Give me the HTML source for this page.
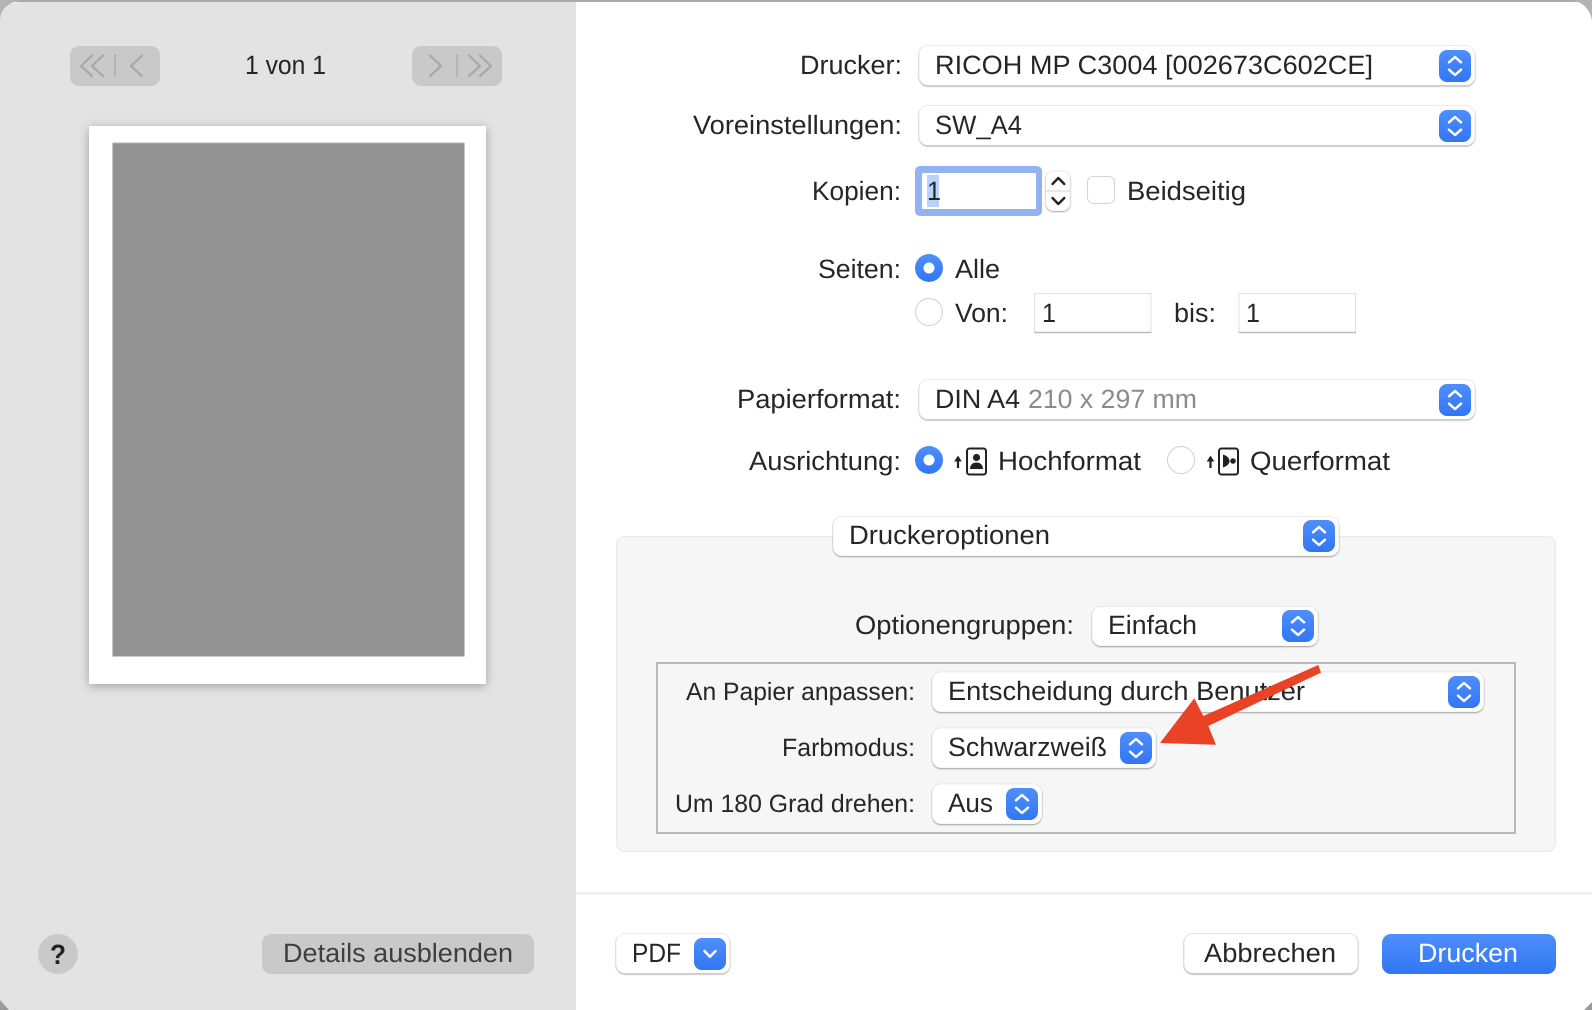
<!DOCTYPE html>
<html lang="de">
<head>
<meta charset="utf-8">
<title>Drucken</title>
<style>
html,body{margin:0;padding:0;width:1592px;height:1010px;overflow:hidden;background:#fff}
svg{display:block}
text{font-family:"Liberation Sans",Arial,sans-serif;font-size:26.5px;fill:#262626;text-rendering:geometricPrecision}
.s{font-size:25px}
.g{fill:#8b8b8b}
.sel{fill:#fff;stroke:#000;stroke-opacity:.07;stroke-width:1}
.w{fill:none;stroke:#fff;stroke-width:2.5;stroke-linecap:round;stroke-linejoin:round}
.nav{fill:none;stroke:#a8a8a8;stroke-width:2.2;stroke-linecap:round;stroke-linejoin:round}
.field{fill:#fff;stroke:#e2e2e2;stroke-width:1}
</style>
</head>
<body>
<svg width="1592" height="1010" viewBox="0 0 1592 1010" xmlns="http://www.w3.org/2000/svg">
<defs>
<linearGradient id="b" x1="0" y1="0" x2="0" y2="1"><stop offset="0" stop-color="#4e8ffb"/><stop offset="1" stop-color="#3176f5"/></linearGradient>
<filter id="sh" x="-5%" y="-20%" width="110%" height="150%"><feDropShadow dx="0" dy="1" stdDeviation=".7" flood-color="#000" flood-opacity=".32"/></filter>
<filter id="pg" x="-10%" y="-10%" width="120%" height="120%"><feDropShadow dx="0" dy="2" stdDeviation="5" flood-color="#000" flood-opacity=".3"/></filter>
<g id="ud"><rect width="32" height="32" rx="8" fill="url(#b)"/><path class="w" d="M10 12.3L16 7L22 12.3M10 19.7L16 25L22 19.7"/></g>
</defs>

<!-- window frame -->
<rect width="1592" height="1010" fill="#fff"/>
<rect x="0" y="0" width="1592" height="2" fill="#aaa"/>
<path d="M0 0H22Q4 2 0 20Z" fill="#b4b4b4"/>
<path d="M1592 0H1570Q1588 2 1592 20Z" fill="#b4b4b4"/>

<!-- sidebar -->
<path d="M0 20Q1 3 20 2H576V1010H9L0 1000Z" fill="#e3e3e3"/>
<path d="M0 1000L9 1010H0Z" fill="#9a9a9a"/>
<path d="M1592 1002L1584 1010H1592Z" fill="#9a9a9a"/>

<!-- nav -->
<rect x="70" y="46" width="90" height="40" rx="9" fill="#c9c9c9"/>
<path class="nav" d="M92 55.5L81 66L92 76M103 55.5L92 66L103 76M142 55.5L131 66L142 76"/>
<path d="M115 54V77" stroke="#b0b0b0" stroke-width="1.6"/>
<rect x="412" y="46" width="90" height="40" rx="9" fill="#c9c9c9"/>
<path class="nav" d="M430 55.5L441 66L430 76M469 55.5L480 66L469 76M480 55.5L491 66L480 76"/>
<path d="M457 54V77" stroke="#b0b0b0" stroke-width="1.6"/>
<text x="245" y="74" textLength="81" lengthAdjust="spacingAndGlyphs">1 von 1</text>

<!-- page preview -->
<rect x="89" y="126" width="397" height="558" fill="#fff" filter="url(#pg)"/>
<rect x="112.5" y="142.5" width="352" height="514" fill="#929292"/>
<path d="M112.5 143H464.5" stroke="#b5b5b5" stroke-width="1"/>

<!-- bottom left -->
<circle cx="58" cy="954" r="20" fill="#c9c9c9"/>
<text x="50" y="964" textLength="16" lengthAdjust="spacingAndGlyphs" style="font-size:28px;fill:#222;font-weight:bold">?</text>
<rect x="262" y="934" width="272" height="40" rx="9" fill="#c9c9c9"/>
<text x="283" y="962" textLength="230" lengthAdjust="spacingAndGlyphs" style="fill:#3e3e3e">Details ausblenden</text>

<!-- Drucker -->
<text x="800" y="74" textLength="102" lengthAdjust="spacingAndGlyphs">Drucker:</text>
<rect class="sel" x="919" y="45.5" width="556" height="40" rx="9" filter="url(#sh)"/>
<text x="935" y="74" textLength="438" lengthAdjust="spacingAndGlyphs">RICOH MP C3004 [002673C602CE]</text>
<use href="#ud" x="1439" y="50"/>

<!-- Voreinstellungen -->
<text x="693" y="134" textLength="209" lengthAdjust="spacingAndGlyphs">Voreinstellungen:</text>
<rect class="sel" x="919" y="105.5" width="556" height="40" rx="9" filter="url(#sh)"/>
<text x="935" y="134" textLength="87" lengthAdjust="spacingAndGlyphs">SW_A4</text>
<use href="#ud" x="1439" y="110"/>

<!-- Kopien -->
<text x="812" y="200" textLength="89" lengthAdjust="spacingAndGlyphs">Kopien:</text>
<rect x="915" y="166" width="127" height="50" rx="5" fill="#92b2f2"/>
<rect x="922" y="173" width="114" height="36" fill="#fff"/>
<rect x="927" y="175" width="12" height="32" fill="#b7d3fb"/>
<text x="927" y="200" textLength="14" lengthAdjust="spacingAndGlyphs">1</text>
<rect class="sel" x="1045.5" y="171" width="25" height="40" rx="8" filter="url(#sh)"/>
<path d="M1046 191H1070" stroke="#e0e0e0" stroke-width="1.5"/>
<path d="M1052.5 184L1058.3 178L1064.3 184M1052.5 198L1058.3 204L1064.3 198" fill="none" stroke="#222" stroke-width="2.4" stroke-linecap="round" stroke-linejoin="round"/>
<rect x="1087.5" y="176.5" width="27" height="27" rx="6" fill="#fff" stroke="#d5d5d5"/>
<text x="1127" y="200" textLength="119" lengthAdjust="spacingAndGlyphs">Beidseitig</text>

<!-- Seiten -->
<text x="818" y="278" textLength="83" lengthAdjust="spacingAndGlyphs">Seiten:</text>
<circle cx="929" cy="268" r="14" fill="url(#b)"/><circle cx="929" cy="268" r="5.5" fill="#fff"/>
<text x="955" y="278" textLength="45" lengthAdjust="spacingAndGlyphs">Alle</text>
<circle cx="929" cy="312" r="13.5" fill="#fff" stroke="#cfcfcf"/>
<text x="955" y="322" textLength="53" lengthAdjust="spacingAndGlyphs">Von:</text>
<rect class="field" x="1034.5" y="293.5" width="116.5" height="39"/>
<path d="M1034 332.5H1151.5" stroke="#bdbdbd" stroke-width="1.6"/>
<text x="1042" y="322" textLength="14" lengthAdjust="spacingAndGlyphs">1</text>
<text x="1174" y="322" textLength="42" lengthAdjust="spacingAndGlyphs">bis:</text>
<rect class="field" x="1239" y="293.5" width="116.5" height="39"/>
<path d="M1238.5 332.5H1356" stroke="#bdbdbd" stroke-width="1.6"/>
<text x="1246" y="322" textLength="14" lengthAdjust="spacingAndGlyphs">1</text>

<!-- Papierformat -->
<text x="737" y="408" textLength="164" lengthAdjust="spacingAndGlyphs">Papierformat:</text>
<rect class="sel" x="919" y="379.5" width="556" height="40" rx="9" filter="url(#sh)"/>
<text x="935" y="408" textLength="85" lengthAdjust="spacingAndGlyphs">DIN A4</text>
<text class="g" x="1028" y="408" textLength="169" lengthAdjust="spacingAndGlyphs">210 x 297 mm</text>
<use href="#ud" x="1439" y="384"/>

<!-- Ausrichtung -->
<text x="749" y="470" textLength="152" lengthAdjust="spacingAndGlyphs">Ausrichtung:</text>
<circle cx="929" cy="460" r="14" fill="url(#b)"/><circle cx="929" cy="460" r="5.5" fill="#fff"/>
<path d="M958 468V460" stroke="#222" stroke-width="2.2"/><path d="M954.2 461.5L958 455.5L961.8 461.5Z" fill="#222"/>
<rect x="967" y="448.5" width="19" height="26" rx="2.5" fill="none" stroke="#222" stroke-width="2"/>
<circle cx="976.5" cy="457.5" r="3.6" fill="#222"/>
<path d="M970 469C970 464.5 973 462.5 976.5 462.5C980 462.5 983 464.5 983 469Z" fill="#222"/>
<text x="998" y="470" textLength="143" lengthAdjust="spacingAndGlyphs">Hochformat</text>
<circle cx="1181" cy="460" r="13.5" fill="#fff" stroke="#cfcfcf"/>
<path d="M1210.5 468V460" stroke="#222" stroke-width="2.2"/><path d="M1206.7 461.5L1210.5 455.5L1214.3 461.5Z" fill="#222"/>
<rect x="1219" y="448.5" width="19" height="26" rx="2.5" fill="none" stroke="#222" stroke-width="2"/>
<path d="M1223 454.5C1227.5 456 1229.5 458.5 1229.5 461C1229.5 463.5 1227.5 466 1223 467.5Z" fill="#222"/>
<circle cx="1233" cy="461" r="2.8" fill="#222"/>
<text x="1250" y="470" textLength="140" lengthAdjust="spacingAndGlyphs">Querformat</text>

<!-- panel -->
<rect x="616.5" y="536.5" width="939" height="315" rx="8" fill="#f6f6f6" stroke="#e9e9e9"/>
<rect class="sel" x="833" y="516.5" width="506" height="39.5" rx="9" filter="url(#sh)"/>
<text x="849" y="544" textLength="201" lengthAdjust="spacingAndGlyphs">Druckeroptionen</text>
<use href="#ud" x="1303" y="520"/>

<text x="855" y="634" textLength="219" lengthAdjust="spacingAndGlyphs">Optionengruppen:</text>
<rect class="sel" x="1092" y="606.5" width="226" height="39.5" rx="9" filter="url(#sh)"/>
<text x="1108" y="634" textLength="89" lengthAdjust="spacingAndGlyphs">Einfach</text>
<use href="#ud" x="1282" y="610"/>

<rect x="657" y="663" width="858" height="170" fill="none" stroke="#b9b9b9" stroke-width="2"/>

<text class="s" x="686" y="700" textLength="229" lengthAdjust="spacingAndGlyphs">An Papier anpassen:</text>
<rect class="sel" x="932" y="672" width="552" height="40" rx="9" filter="url(#sh)"/>
<text x="948" y="700" textLength="357" lengthAdjust="spacingAndGlyphs">Entscheidung durch Benutzer</text>
<use href="#ud" x="1448" y="676"/>

<text class="s" x="782" y="756" textLength="133" lengthAdjust="spacingAndGlyphs">Farbmodus:</text>
<rect class="sel" x="932" y="728" width="224" height="40" rx="9" filter="url(#sh)"/>
<text x="948" y="756" textLength="159" lengthAdjust="spacingAndGlyphs">Schwarzweiß</text>
<use href="#ud" x="1120" y="732"/>

<text class="s" x="675" y="812" textLength="240" lengthAdjust="spacingAndGlyphs">Um 180 Grad drehen:</text>
<rect class="sel" x="932" y="784" width="110" height="40" rx="9" filter="url(#sh)"/>
<text x="948" y="812" textLength="45" lengthAdjust="spacingAndGlyphs">Aus</text>
<use href="#ud" x="1006" y="788"/>

<!-- arrow -->
<path d="M1318.3 665L1321 672.6L1208.3 726L1216 744.8L1160 743L1194.3 698.3L1203.3 716Z" fill="#ea4224"/>

<!-- footer -->
<path d="M576 893.5H1592" stroke="#e6e6e6" stroke-width="1.5"/>
<rect class="sel" x="616" y="933.5" width="114" height="40" rx="9" filter="url(#sh)"/>
<text x="632" y="962" textLength="49" lengthAdjust="spacingAndGlyphs">PDF</text>
<rect x="694" y="938" width="32" height="32" rx="8" fill="url(#b)"/>
<path class="w" d="M704.5 951L710 956.8L715.5 951"/>
<rect x="1184" y="933.5" width="174" height="40" rx="9" fill="#fff" stroke="#000" stroke-opacity=".1" filter="url(#sh)"/>
<text x="1204" y="962" textLength="132" lengthAdjust="spacingAndGlyphs">Abbrechen</text>
<rect x="1382" y="934" width="174" height="40" rx="9" fill="url(#b)"/>
<text x="1418" y="962" textLength="100" lengthAdjust="spacingAndGlyphs" style="fill:#fff">Drucken</text>
</svg>
</body>
</html>
